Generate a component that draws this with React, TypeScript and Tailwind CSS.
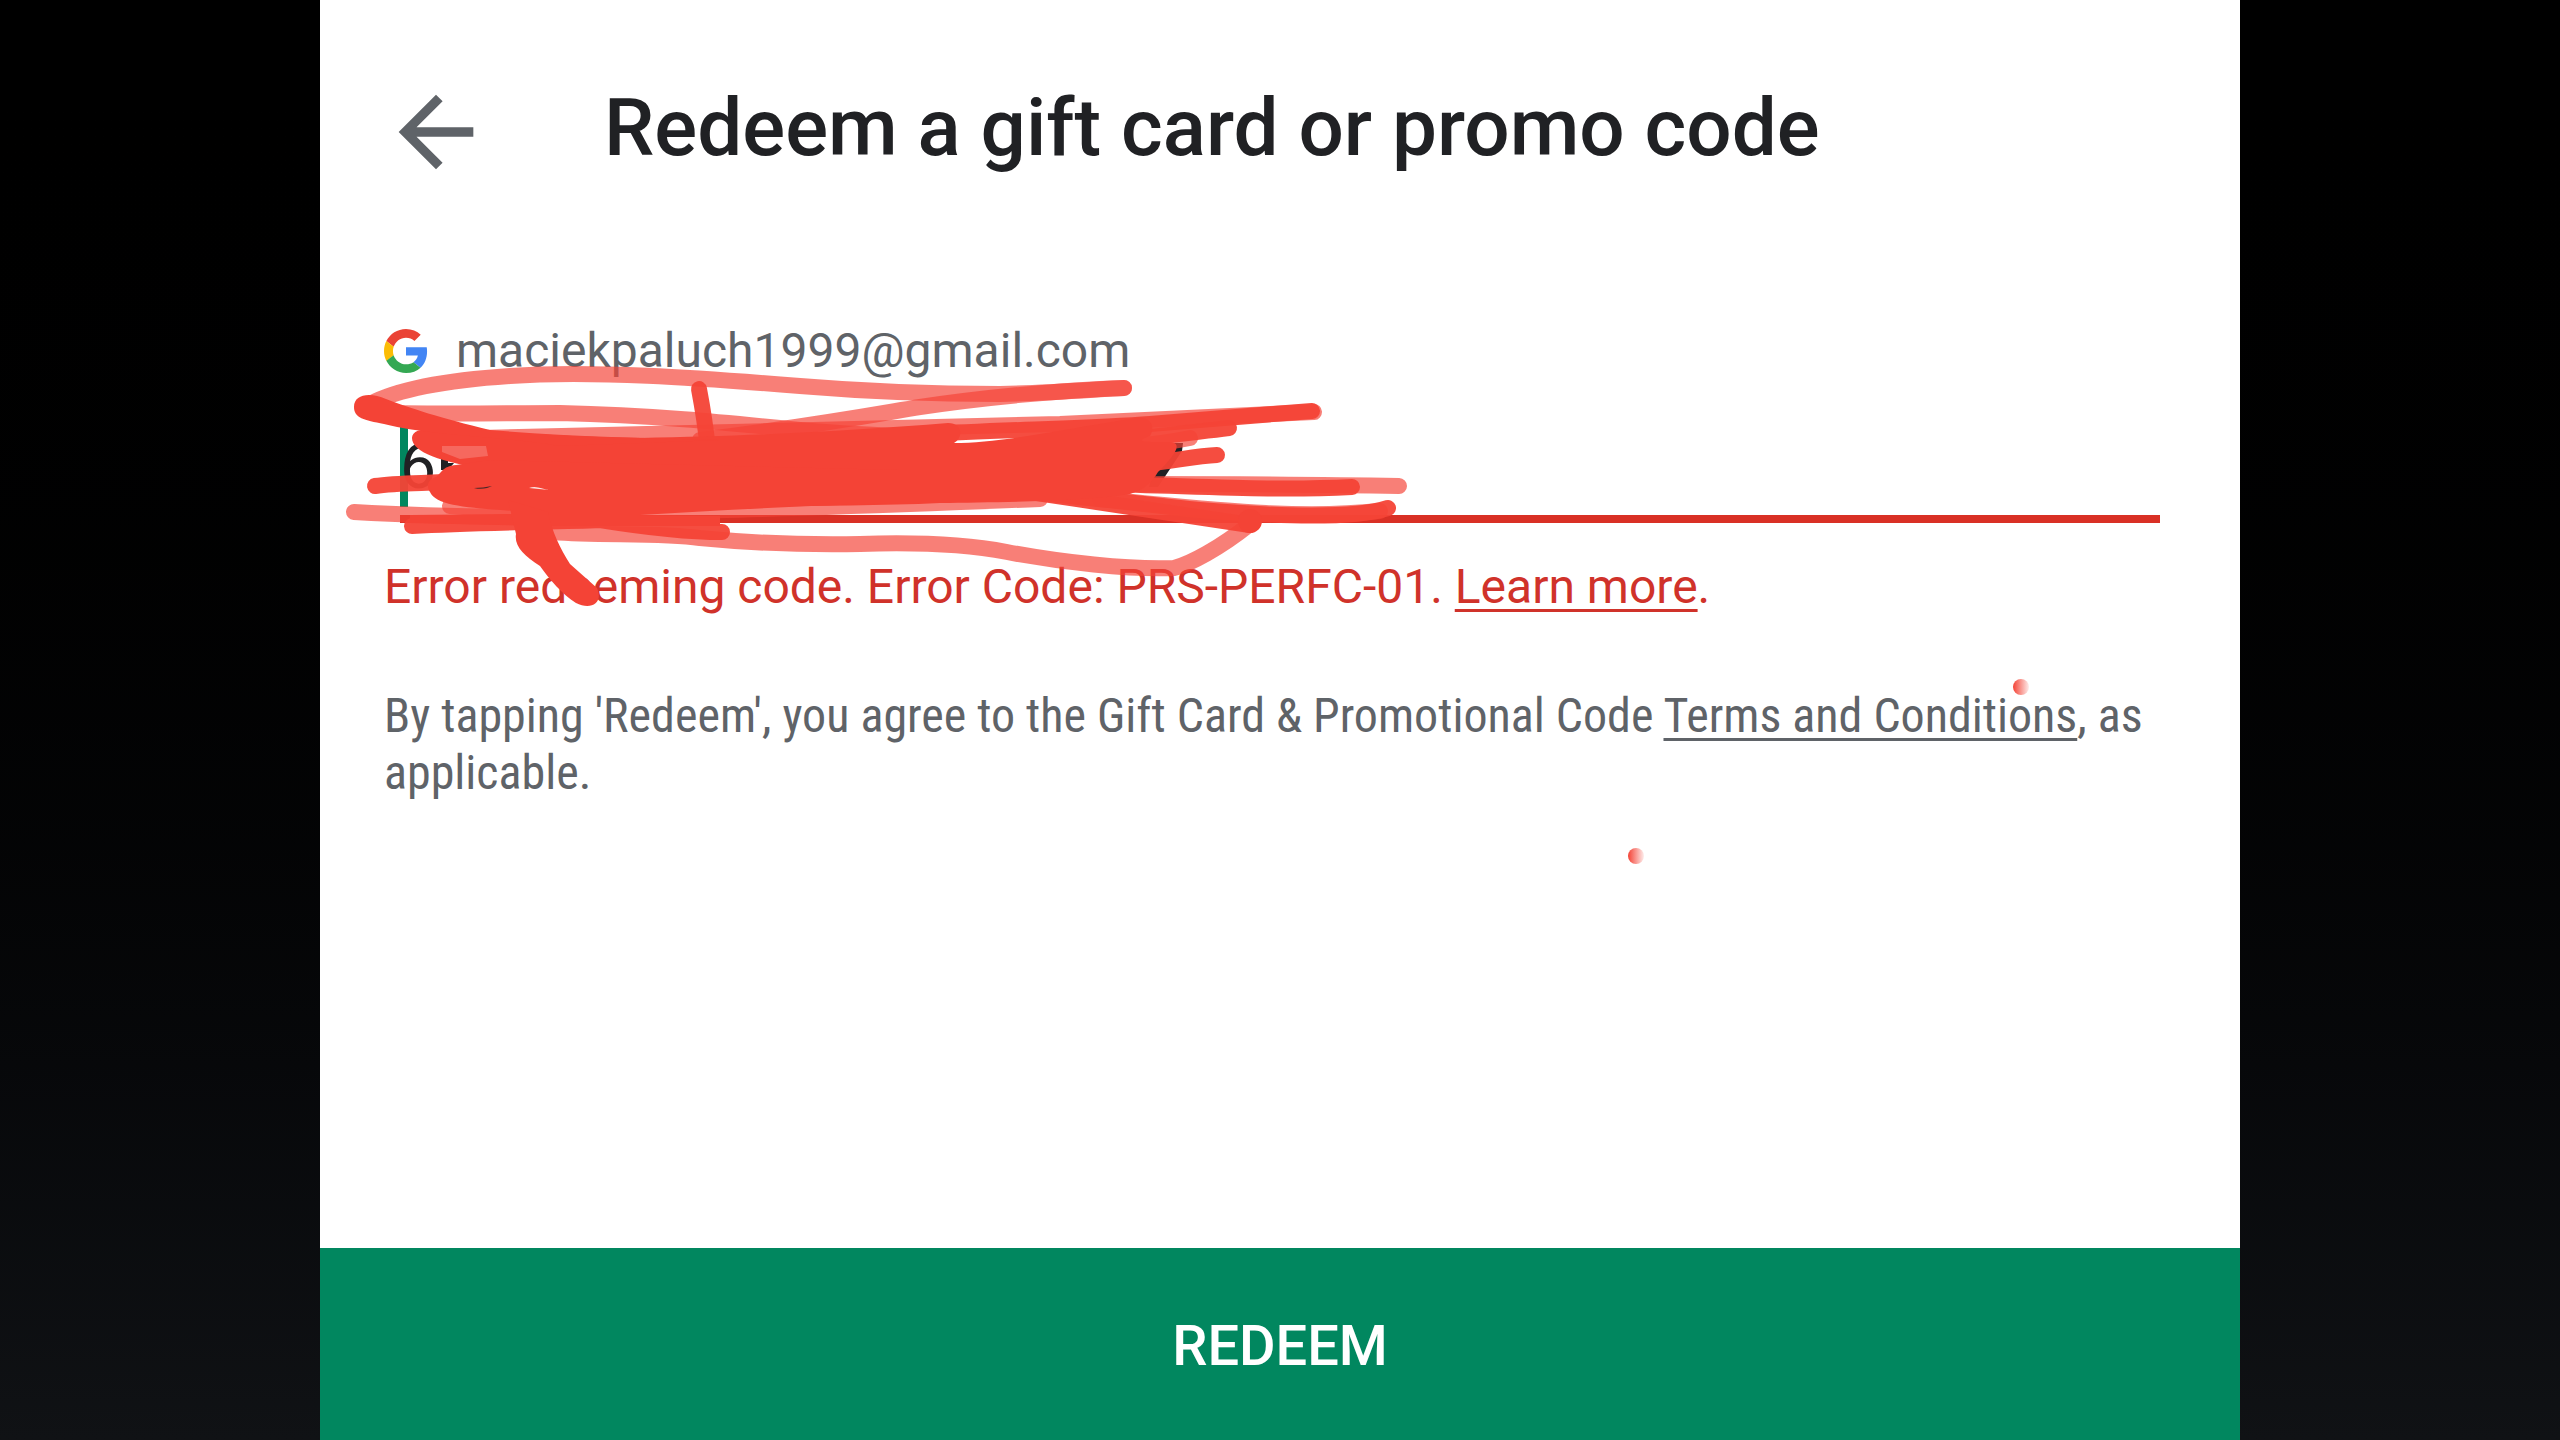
const GoogleLogo = () => (
  <svg viewBox="0 0 48 48" className="size-11 shrink-0" aria-hidden="true">
    <path fill="#EA4335" d="M24 9.5c3.54 0 6.71 1.22 9.21 3.6l6.85-6.85C35.9 2.38 30.47 0 24 0 14.62 0 6.51 5.38 2.56 13.22l7.98 6.19C12.43 13.72 17.74 9.5 24 9.5z" />
    <path fill="#4285F4" d="M46.98 24.55c0-1.57-.15-3.09-.38-4.55H24v9.02h12.94c-.58 2.96-2.26 5.48-4.78 7.18l7.73 6c4.51-4.18 7.09-10.36 7.09-17.65z" />
    <path fill="#FBBC05" d="M10.53 28.59c-.48-1.45-.76-2.99-.76-4.59s.27-3.14.76-4.59l-7.98-6.19C.92 16.46 0 20.12 0 24c0 3.88.92 7.54 2.56 10.78l7.97-6.19z" />
    <path fill="#34A853" d="M24 48c6.48 0 11.93-2.13 15.89-5.81l-7.73-6c-2.15 1.45-4.92 2.3-8.16 2.3-6.26 0-11.57-4.22-13.47-9.91l-7.98 6.19C6.51 42.62 14.62 48 24 48z" />
  </svg>
);

// Marker strokes that hide the code, back to front
const lightStrokes = [
  'M370 404 C400 388 450 380 510 376 C590 370 700 378 800 386 C860 391 930 394 1000 394 C1050 393 1100 389 1124 388',
  'M370 412 C420 415 500 413 560 413 C650 415 720 422 800 430 C840 434 900 436 940 438',
  'M1124 388 C1060 390 980 398 920 407 C860 417 800 428 700 440',
  'M1314 412 C1220 416 1130 421 1060 424 C960 428 800 432 480 438',
  'M1190 438 C1150 446 1100 450 1040 452',
  'M1399 486 C1300 484 1220 484 1130 484',
  'M1380 511 C1290 520 1200 508 1100 499',
  'M354 512 C420 516 500 518 620 516',
  'M1250 524 C1220 548 1190 564 1174 568 C1130 570 1060 562 1007 552 C970 545 920 542 860 544 C800 545 740 542 700 538 C660 532 600 536 553 532',
  'M450 506 C600 518 800 508 1040 499',
];

const solidStrokes = [
  'M1312 411 C1260 415 1210 419 1150 424 C1100 428 1000 430 930 434',
  'M1229 428 C1190 433 1140 438 1080 445',
  'M1217 455 C1190 456 1170 463 1120 466',
  'M1352 487 C1270 491 1200 486 1100 484',
  'M1388 508 C1350 520 1260 515 1200 510 C1140 504 1080 496 1000 490',
  'M1250 525 C1200 518 1110 504 1030 492',
  'M375 486 C400 482 430 484 480 480',
  'M412 526 C480 522 560 522 600 520 C650 528 690 532 722 532',
  'M699 389 C703 410 706 430 708 450',
];

const Scribble = () => (
  <svg
    viewBox="0 0 1920 1440"
    className="pointer-events-none absolute top-0 left-0 w-full"
    fill="none"
    strokeLinecap="round"
    strokeLinejoin="round"
    aria-hidden="true"
  >
    <defs>
      <linearGradient id="dot">
        <stop offset="0" stopColor="#f44336" />
        <stop offset="1" stopColor="#f44336" stopOpacity="0.1" />
      </linearGradient>
    </defs>
    <g transform="translate(-320 0)">
      <path fill="#202124" d="M441 444h26v6h-19v13h6l-6 7h-7zM1160 443h23l-1 8-24 36h-9z" />
      <g stroke="#f44336" strokeWidth="16" strokeOpacity="0.68">
        {lightStrokes.map((d) => (
          <path key={d} d={d} />
        ))}
      </g>
      <g stroke="#f44336" strokeWidth="16" strokeOpacity="0.95">
        {solidStrokes.map((d) => (
          <path key={d} d={d} />
        ))}
      </g>
      {/* Upper band */}
      <path
        fill="#f44336"
        d="M412 438 C412 430 424 428 440 429 C500 431 540 436 640 438 C760 436 860 430 948 423 C962 423 964 437 954 443 C1000 443 1060 430 1136 418 C1150 416 1156 426 1150 436 C1130 443 1150 442 1170 442 C1184 443 1174 456 1158 472 C1152 482 1144 490 1130 494 C1080 502 1000 502 940 503 C860 507 760 505 700 508 L560 507 L490 470 C440 462 412 452 412 438Z"
      />
      {/* Lower band, left part of it thins out into the underline */}
      <path
        fill="#f44336"
        d="M490 460 L456 465 C442 466 441 474 436 477 C426 480 427 488 430 492 C436 506 470 508 515 511 L514 514 L410 515 L410 523 L540 526 L720 526 L720 516 L640 515 C720 510 800 506 900 503 L900 470Z"
      />
      <path fill="#f44336" d="M354 407 C354 394 370 392 386 399 C410 408 440 418 490 430 C560 436 640 438 720 440 L560 446 C500 436 430 436 384 424 C364 420 354 418 354 407Z" />
      <path fill="#f44336" d="M508 500 L548 512 C552 532 560 548 570 564 L597 588 C604 604 590 610 576 603 C562 594 550 580 540 566 C524 556 514 546 516 534Z" />
      <circle cx="1250" cy="521" r="12" fill="#f44336" />
      <path fill="#fff" fillOpacity="0.85" d="M529 488 C536 485 542 489 549 490z" />
      <path fill="#202124" fillOpacity="0.8" d="M474 488 C482 490 488 488 492 486 C486 487 480 488 474 488z" />
      <path fill="#fff" fillOpacity="0.2" d="M442 446 L486 446 L488 456 L460 459 L442 452z" />
      <circle cx="2021" cy="687" r="8" fill="url(#dot)" />
      <circle cx="1636" cy="856" r="8" fill="url(#dot)" />
    </g>
  </svg>
);

export default function App() {
  return (
    <div className="min-h-screen bg-linear-to-b from-black to-[#101215] font-['Roboto',sans-serif]">
      <main className="relative mx-auto flex min-h-screen w-3/4 flex-col bg-white">
        <header className="flex items-center gap-28 px-15 pt-19">
          <button type="button" aria-label="Back" className="shrink-0">
            <svg viewBox="0 0 24 24" className="size-28" fill="#5f6368">
              <path d="M20 11H7.83l5.59-5.59L12 4l-8 8 8 8 1.41-1.41L7.83 13H20v-2z" />
            </svg>
          </button>
          <h1 className="pb-2 text-[80px] leading-24 font-medium text-[#202124]">Redeem a gift card or promo code</h1>
        </header>

        <form className="flex grow flex-col" onSubmit={(e) => e.preventDefault()}>
          <div className="grow px-16 pt-[135px]">
            <div className="flex items-center gap-7 text-5xl leading-14 text-[#5f6368]">
              <GoogleLogo />
              <span>maciekpaluch1999@gmail.com</span>
            </div>

            <div className="mx-4 mt-10 flex items-center border-b-8 border-[#d93025] pb-2">
              <span className="h-22 w-2 bg-[#01875f]" />
              <input
                type="text"
                aria-label="Gift card or promo code"
                defaultValue="6"
                className="-ml-2 h-22 grow bg-transparent pt-2 text-[64px] text-[#202124] outline-none"
              />
            </div>

            <p className="mt-9 text-5xl leading-14 text-[#d0322a]">
              Error redeeming code. Error Code: PRS-PERFC-01.{' '}
              <a href="#learn-more" className="underline decoration-3 underline-offset-6">Learn more</a>.
            </p>

            <p className="mt-18 font-['Roboto_Condensed','Roboto',sans-serif] text-5xl leading-[57px] text-[#5f6368]">
              By tapping 'Redeem', you agree to the Gift Card &amp; Promotional Code{' '}
              <a href="#terms" className="underline decoration-3 underline-offset-6">Terms and Conditions</a>, as applicable.
            </p>
          </div>

          <button type="submit" className="h-48 bg-[#01875f] pt-1 text-[56px] font-medium text-white">
            REDEEM
          </button>
        </form>

        <Scribble />
      </main>
    </div>
  );
}
